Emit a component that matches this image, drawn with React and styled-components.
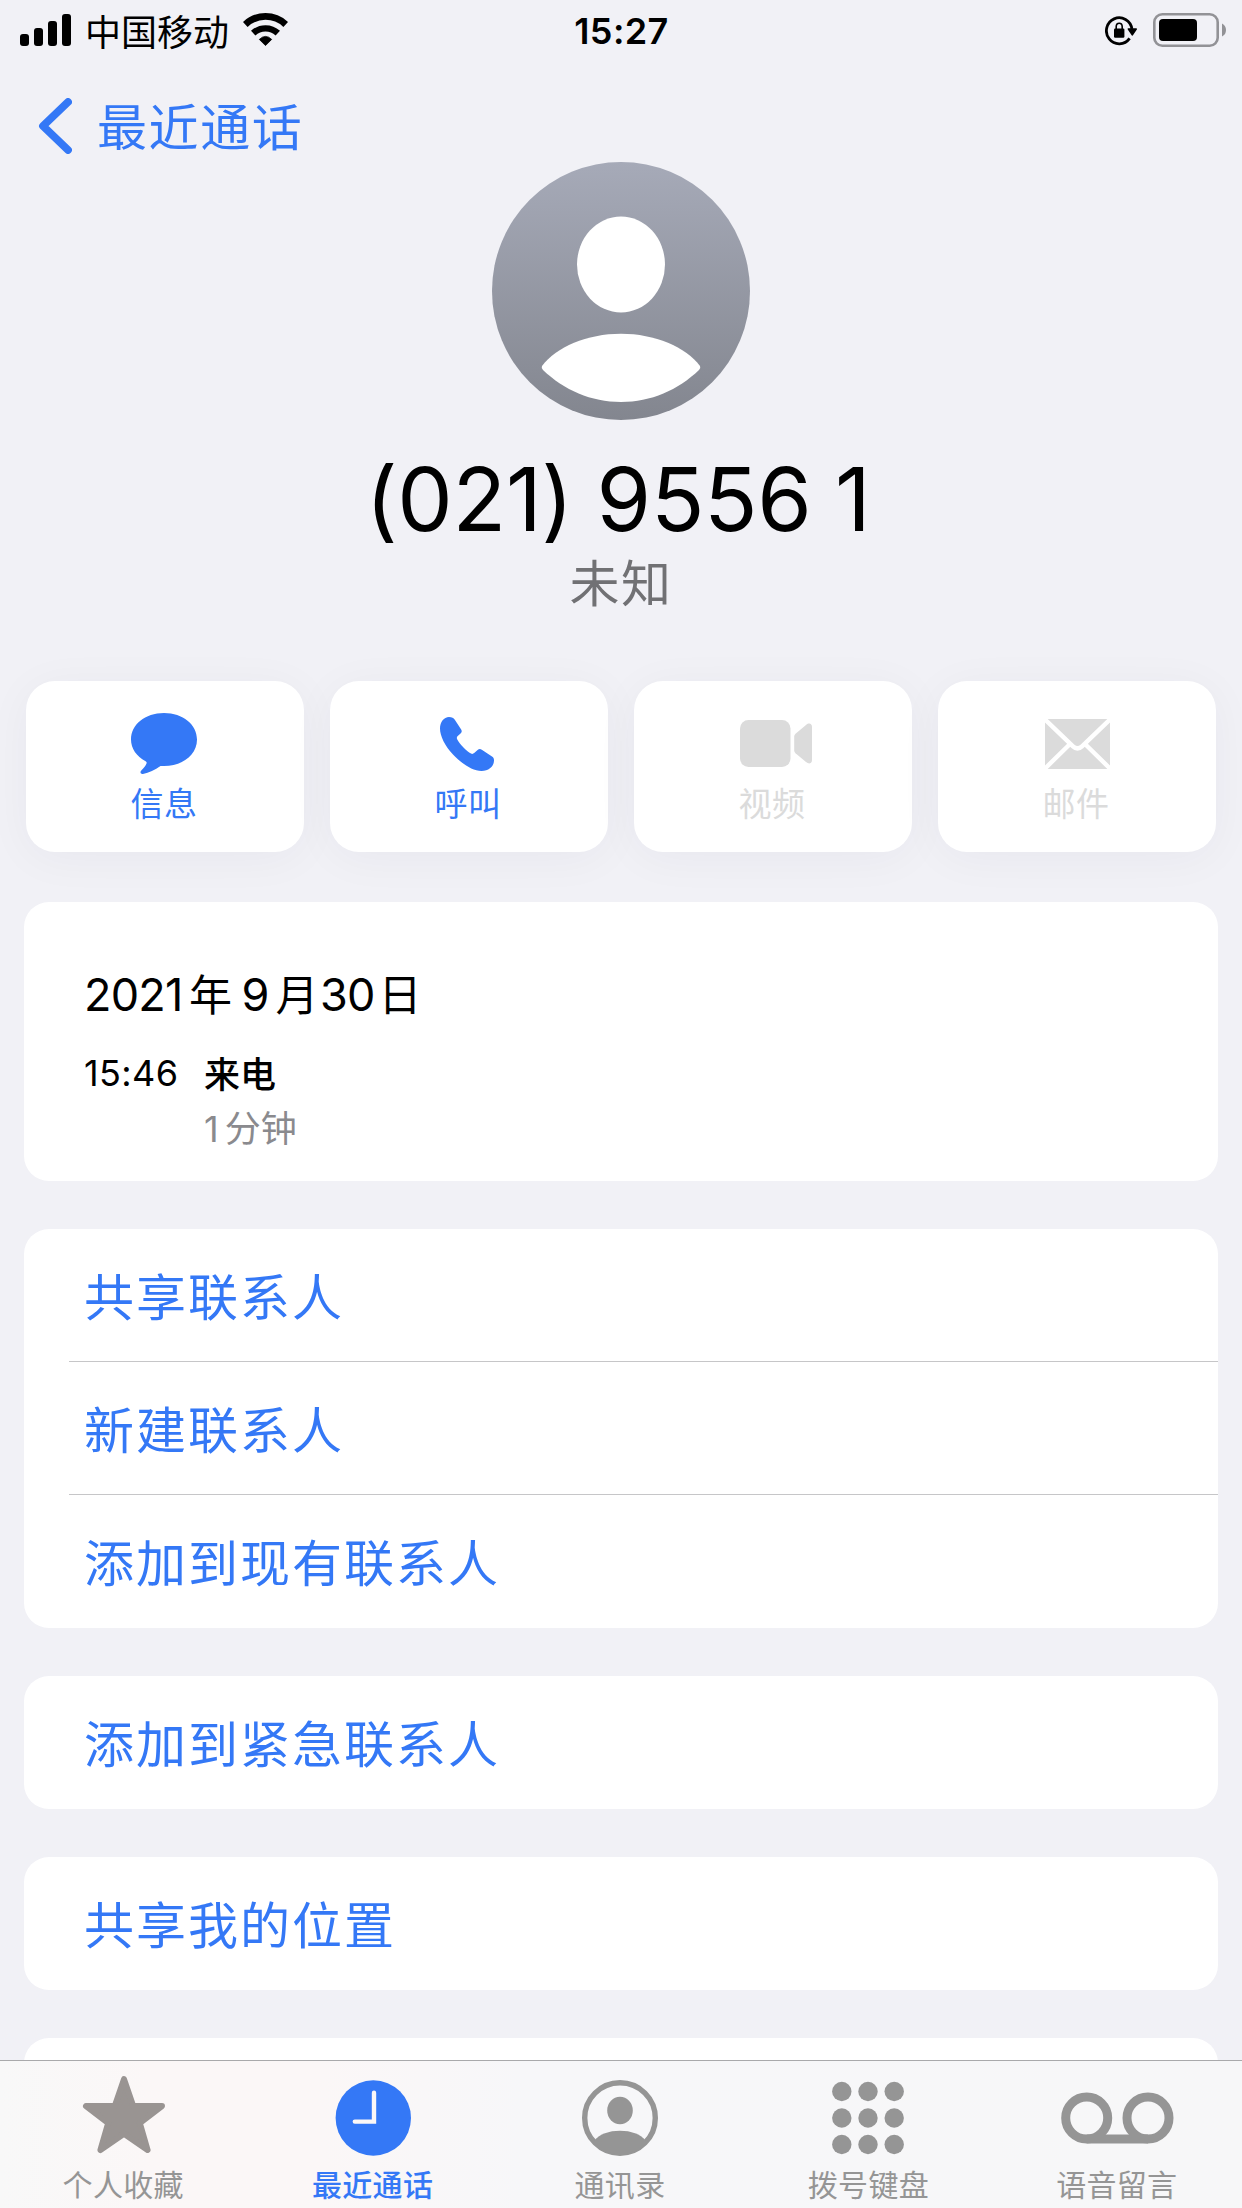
import React from "react";
import styled, { createGlobalStyle } from "styled-components";

const BLUE = "#3478f6";
const LATIN = '"Inter", "Noto Sans CJK SC", sans-serif';
const HAN = '"Noto Sans CJK SC", sans-serif';

const GlobalStyle = createGlobalStyle`
  * { box-sizing: border-box; }
  body { margin: 0; background: #f1f1f6; font-family: ${HAN}; }
  svg { display: block; flex: none; }
`;

const Screen = styled.div`
  width: 1242px;
  height: 2208px;
  display: flex;
  flex-direction: column;
  overflow: hidden;
  background: #f1f1f6;
  color: #000;
`;

const StatusBar = styled.header`
  flex: none;
  height: 60px;
  padding: 0 16px 0 20px;
  display: grid;
  grid-template-columns: 1fr auto 1fr;
  align-items: center;
`;

const StatusGroup = styled.div`
  display: flex;
  align-items: center;
  justify-content: ${(p) => (p.$end ? "flex-end" : "flex-start")};
  gap: ${(p) => p.$gap}px;
`;

const Carrier = styled.span`
  font-size: 36px;
  line-height: 54px;
  padding-bottom: 1px;
`;

const Clock = styled.span`
  font: 600 36px/57px ${LATIN};
  letter-spacing: 0.4px;
  margin-left: -3px;
  padding-top: 3px;
`;

const NavBar = styled.nav`
  flex: none;
  height: 102px;
  padding: 38px 0 0 38px;
`;

const BackButton = styled.a`
  display: flex;
  align-items: center;
  gap: 25px;
  height: 56px;
  color: ${BLUE};
  font-size: 50px;
  line-height: 56px;
  letter-spacing: 1.6px;

  span {
    padding-bottom: 5px;
  }
`;

const Main = styled.main`
  flex: 1;
  min-height: 0;
  overflow: hidden;
`;

const Profile = styled.section`
  display: flex;
  flex-direction: column;
  align-items: center;
`;

const PhoneNumber = styled.h1`
  margin: 29px 6px 0 0;
  font: 400 88px/100px ${LATIN};
  font-feature-settings: "calt" 0;
  letter-spacing: -0.3px;
  word-spacing: -1px;
  white-space: pre;
`;

const Subtitle = styled.div`
  padding-top: 1px;
  font-size: 50px;
  line-height: 60px;
  letter-spacing: 1.6px;
  color: #717174;
`;

const Actions = styled.section`
  display: grid;
  grid-template-columns: repeat(4, 1fr);
  gap: 26px;
  padding: 0 26px;
  margin: 71px 0 50px;
`;

const ActionCard = styled.div`
  height: 171px;
  padding-top: 30px;
  display: flex;
  flex-direction: column;
  align-items: center;
  gap: 7px;
  border-radius: 29px;
  background: #fff;
  box-shadow: 0 6px 46px rgba(30, 30, 60, 0.045);
  color: ${(p) => (p.$disabled ? "#dbdbdb" : BLUE)};
`;

const ActionIcon = styled.div`
  height: 64px;
  display: flex;
  align-items: center;
  padding-top: ${(p) => 2 * p.$drop}px;
  padding-right: ${(p) => (p.$shift < 0 ? -2 * p.$shift : 0)}px;
  padding-left: ${(p) => (p.$shift > 0 ? 2 * p.$shift : 0)}px;
`;

const ActionLabel = styled.span`
  font-size: 33px;
  line-height: 40px;
  letter-spacing: 0.4px;
  margin-right: 2px;
`;

const Card = styled.section`
  margin: 0 24px 48px;
  border-radius: 25px;
  background: #fff;
  overflow: hidden;
`;

const LogCard = styled(Card)`
  height: 279px;
  padding: 63px 60px 0;
`;

const LogDate = styled.div`
  display: flex;
  align-items: center;
  font: 400 45px/60px ${LATIN};
`;

const DateNumber = styled.span`
  letter-spacing: -0.8px;
`;

const DateUnit = styled.span`
  font-size: 43px;
  padding-left: ${(p) => p.$before}px;
  padding-right: ${(p) => p.$after}px;
`;

const LogGrid = styled.div`
  display: grid;
  grid-template-columns: 120px 1fr;
  row-gap: 12px;
  margin-top: 26px;
  font: 400 36px/44px ${LATIN};
`;

const CallTime = styled.span`
  letter-spacing: 0.4px;
`;

const CallKind = styled.span`
  font-family: ${HAN};
  font-weight: 500;
  margin-top: -1px;
`;

const Duration = styled.span`
  grid-column: 2;
  color: #8a8a8e;

  b {
    font-weight: 400;
    margin-right: 6px;
  }
`;

const Row = styled.div`
  display: flex;
  align-items: center;
  height: 133px;
  margin-left: 45px;
  padding: 0 0 3px 15px;
  border-bottom: ${(p) => (p.$last ? "0" : "1px solid #c6c6c8")};
  color: ${BLUE};
  font-size: 50px;
  letter-spacing: 2px;
`;

const TabBar = styled.footer`
  flex: none;
  height: 148px;
  display: grid;
  grid-template-columns: repeat(5, 1fr);
  border-top: 1px solid #a9a9ab;
  background: linear-gradient(90deg, #f8f8f8 0%, #fbf7f7 12%, #fbf7f7 26%, #f7f7f9 42%, #f7f7f8 100%);
`;

const Tab = styled.div`
  display: flex;
  flex-direction: column;
  align-items: center;
  gap: 6px;
  padding-top: 15px;
  color: ${(p) => (p.$active ? BLUE : "#959595")};
`;

const TabLabel = styled.span`
  font-size: 30px;
  line-height: 34px;
  letter-spacing: 0.3px;
  margin-right: ${(p) => (p.$active ? 0 : 2)}px;
  font-weight: ${(p) => (p.$active ? 500 : 400)};
`;

const SignalIcon = () => (
  <svg width="51" height="32" viewBox="0 0 51 32">
    <rect x="0" y="20" width="9" height="12" rx="3" />
    <rect x="14" y="14" width="9" height="18" rx="3" />
    <rect x="28" y="7" width="9" height="25" rx="3" />
    <rect x="42" y="0" width="9" height="32" rx="3" />
  </svg>
);

const WifiIcon = () => (
  <svg width="45" height="35" viewBox="0 0 45 35" fill="none" stroke="#000">
    <path d="M2.300 11.400A29.600 29.600 0 0 1 42.700 11.400" strokeWidth="6.800" />
    <path d="M10.200 20.200A18 18 0 0 1 34.800 20.200" strokeWidth="6.400" />
    <path d="M22.500 32.600L16.300 26.400Q22.500 20.400 28.700 26.400Z" fill="#000" strokeWidth="0.800" strokeLinejoin="round" />
  </svg>
);

const RotationLockIcon = () => (
  <svg width="32" height="32" viewBox="0 -2 32 32">
    <path d="M26.900 13A12.800 13 0 1 0 24.600 22.400" fill="none" stroke="#000" strokeWidth="2.800" />
    <path d="M23.400 13H31.200L27.300 18.800Z" stroke="#000" strokeWidth="1.600" strokeLinejoin="round" />
    <rect x="9" y="12.600" width="10.400" height="9.200" rx="1.200" />
    <path d="M11.200 13.500V10.800a3 3.500 0 0 1 6 0V13.500" fill="none" stroke="#000" strokeWidth="1.600" />
  </svg>
);

const BatteryIcon = () => (
  <svg width="73" height="34" viewBox="0 0 73 34">
    <rect x="1.300" y="1.300" width="63.400" height="31.400" rx="8" fill="none" stroke="#929296" strokeWidth="2.600" />
    <rect x="6" y="6" width="38" height="22" rx="4" />
    <path d="M69 10.500Q73 12.500 73 17T69 23.500Z" fill="#929296" />
  </svg>
);

const ChevronIcon = () => (
  <svg width="34" height="56" viewBox="0 0 34 56" fill="none" stroke={BLUE} strokeWidth="7.800" strokeLinecap="round" strokeLinejoin="round">
    <path d="M30 4L5 28L30 52" />
  </svg>
);

const Avatar = () => (
  <svg width="258" height="258" viewBox="0 0 258 258">
    <defs>
      <linearGradient id="avatar" x1="0" y1="0" x2="0" y2="1">
        <stop offset="0" stopColor="#a6aab8" />
        <stop offset="1" stopColor="#83868f" />
      </linearGradient>
    </defs>
    <circle cx="129" cy="129" r="129" fill="url(#avatar)" />
    <ellipse cx="129" cy="102.500" rx="44" ry="48" fill="#fff" />
    <path d="M50 204Q49 206 51 208C72 228 99 240 129 240S186 228 207 208Q209 206 208 204C194 185 163 171.700 129 171.700S64 185 50 204Z" fill="#fff" />
  </svg>
);

const MessageIcon = () => (
  <svg width="66" height="61" viewBox="0 0 66 61" fill="currentColor">
    <path d="M33 0C52 0 66 11.500 66 26.500S52 53 33 53H29.500C24 57 18 60 12 60.900C9.600 61.200 8.700 59.200 10.300 57.600C13 54.800 14.800 52.400 15.600 50.300C15.900 49.300 15.500 48.800 14.600 48.200C5.500 43.300 0 35.500 0 26.500C0 11.500 14 0 33 0Z" />
  </svg>
);

const CallIcon = () => (
  <svg width="54" height="54" viewBox="0 0 54 54" fill="currentColor">
    <path d="M9 0C12 0 13.500 1 14.800 2.800L21 12.200C22 13.800 22 14.800 20.800 16.200L17.500 19.300C16.600 20.300 16.700 21.500 17.300 22.600C19.500 27 26.500 34.300 31 36.600C32 37.100 33.200 37 34.200 36.100L37.600 33C39 31.700 40.300 31.700 41.800 32.700L52 39.400C53.600 40.500 54 41.600 54 43.600C54 49 49 54 41.500 54C32 54 21 46 13 37.500C5 29 0 19 0 11.500C0 5 4 0 9 0Z" />
  </svg>
);

const VideoIcon = () => (
  <svg width="72" height="47" viewBox="0 0 72 47" fill="currentColor">
    <rect width="50.500" height="47" rx="8.500" />
    <path d="M54.200 17C54.200 15.500 54.600 14.700 55.500 13.800L66 5C69 2.500 72 3.500 72 7V40C72 43.500 69 44.500 66 42L55.500 33.200C54.600 32.300 54.200 31.500 54.200 30Z" />
  </svg>
);

const MailIcon = () => (
  <svg width="65" height="50" viewBox="0 0 65 50" fill="none" stroke="#fff" strokeWidth="4.400">
    <rect width="65" height="50" rx="3" fill="currentColor" stroke="none" />
    <path d="M-1 -0.500L28 27.300Q32.500 31.500 37 27.300L66 -0.500" />
    <path d="M-1 50.500L24.500 25.500M66 50.500L40.500 25.500" />
  </svg>
);

const StarIcon = () => (
  <svg width="120" height="84" viewBox="0 0 120 84" fill="#999492" stroke="#999492" strokeWidth="6" strokeLinejoin="round">
    <path d="M60 3.200L69.200 30H98L75.800 47L83.600 74L60 57.700L36.400 74L44.200 47L22 30H50.800Z" />
  </svg>
);

const ClockIcon = () => (
  <svg width="120" height="84" viewBox="0 0 120 84">
    <circle cx="60.300" cy="42" r="37.700" fill={BLUE} />
    <path d="M61 16.700V45.600H41.800" fill="none" stroke="#fbf7f7" strokeWidth="4.400" strokeLinecap="round" />
  </svg>
);

const ContactsIcon = () => (
  <svg width="120" height="84" viewBox="0 0 120 84" fill="currentColor">
    <circle cx="59" cy="42" r="35.300" fill="none" stroke="currentColor" strokeWidth="5.400" />
    <ellipse cx="59" cy="34.500" rx="12.800" ry="13.700" />
    <path d="M33.500 64.500C38.500 58 48 54.700 59 54.700S79.500 58 84.500 64.500C78.500 73 69.500 78 59 78S39.500 73 33.500 64.500Z" />
  </svg>
);

const KeypadIcon = () => (
  <svg width="120" height="84" viewBox="0 0 120 84" fill="currentColor">
    {[15.5, 42, 68.5].map((y) =>
      [32.8, 59, 85.2].map((x) => <circle key={`${x}-${y}`} cx={x} cy={y} r="9.700" />)
    )}
  </svg>
);

const VoicemailIcon = () => (
  <svg width="120" height="84" viewBox="0 0 120 84" fill="none" stroke="currentColor" strokeWidth="9">
    <circle cx="28.700" cy="42" r="21" />
    <circle cx="90" cy="42" r="21" />
    <path d="M28.700 63H90" />
  </svg>
);

const actions = [
  { label: "信息", Icon: MessageIcon, shift: -1, drop: 0 },
  { label: "呼叫", Icon: CallIcon, shift: -2, drop: 1 },
  { label: "视频", Icon: VideoIcon, shift: 3, drop: 0, disabled: true },
  { label: "邮件", Icon: MailIcon, shift: 0, drop: 1, disabled: true },
];

const groups = [
  ["共享联系人", "新建联系人", "添加到现有联系人"],
  ["添加到紧急联系人"],
  ["共享我的位置"],
  [""],
];

const tabs = [
  { label: "个人收藏", Icon: StarIcon },
  { label: "最近通话", Icon: ClockIcon, active: true },
  { label: "通讯录", Icon: ContactsIcon },
  { label: "拨号键盘", Icon: KeypadIcon },
  { label: "语音留言", Icon: VoicemailIcon },
];

export default function App() {
  return (
    <Screen>
      <GlobalStyle />
      <StatusBar>
        <StatusGroup $gap={14}>
          <SignalIcon />
          <Carrier>中国移动</Carrier>
          <WifiIcon />
        </StatusGroup>
        <Clock>15:27</Clock>
        <StatusGroup $end $gap={16}>
          <RotationLockIcon />
          <BatteryIcon />
        </StatusGroup>
      </StatusBar>
      <NavBar>
        <BackButton>
          <ChevronIcon />
          <span>最近通话</span>
        </BackButton>
      </NavBar>
      <Main>
        <Profile>
          <Avatar />
          <PhoneNumber>(021) 9556 1</PhoneNumber>
          <Subtitle>未知</Subtitle>
        </Profile>
        <Actions>
          {actions.map(({ label, Icon, shift, drop, disabled }) => (
            <ActionCard key={label} $disabled={disabled}>
              <ActionIcon $shift={shift} $drop={drop}>
                <Icon />
              </ActionIcon>
              <ActionLabel>{label}</ActionLabel>
            </ActionCard>
          ))}
        </Actions>
        <LogCard>
          <LogDate>
            <DateNumber>2021</DateNumber>
            <DateUnit $before={6.5} $after={9.5}>年</DateUnit>
            <DateNumber>9</DateNumber>
            <DateUnit $before={7} $after={1.5}>月</DateUnit>
            <DateNumber>30</DateNumber>
            <DateUnit $before={4} $after={0}>日</DateUnit>
          </LogDate>
          <LogGrid>
            <CallTime>15:46</CallTime>
            <CallKind>来电</CallKind>
            <Duration>
              <b>1</b>分钟
            </Duration>
          </LogGrid>
        </LogCard>
        {groups.map((rows, g) => (
          <Card key={g}>
            {rows.map((text, i) => (
              <Row key={i} $last={i === rows.length - 1}>
                {text}
              </Row>
            ))}
          </Card>
        ))}
      </Main>
      <TabBar>
        {tabs.map(({ label, Icon, active }) => (
          <Tab key={label} $active={active}>
            <Icon />
            <TabLabel $active={active}>{label}</TabLabel>
          </Tab>
        ))}
      </TabBar>
    </Screen>
  );
}
